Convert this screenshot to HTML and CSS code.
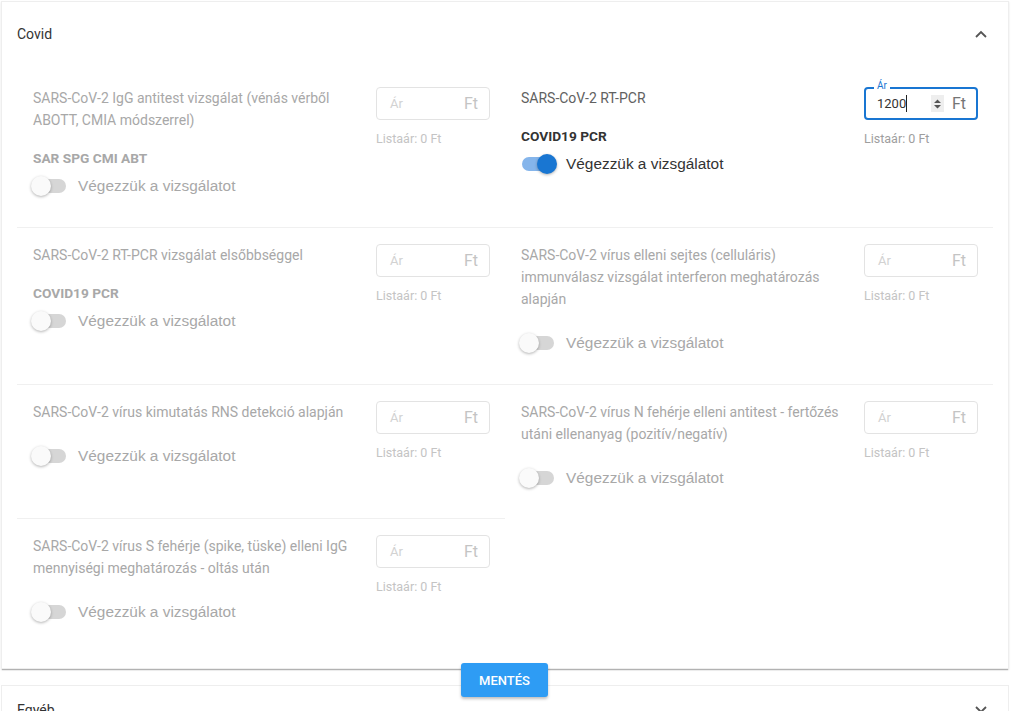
FILE: index.html
```html
<!DOCTYPE html>
<html>
    <head>
        <meta charset="utf-8">
        <title>Vizsgálatok</title>
        <link rel="stylesheet" href="styles.css">
    </head>
    <body>
        <div class="wrapper">
            <div class="panel open">
                <div class="panel-head">
                    <span>Covid</span>
                    <svg class="chev" width="12" height="8" viewBox="0 0 12 8"><path d="M1 7 L6 2 L11 7" fill="none" stroke="#555" stroke-width="1.8"/></svg>
                </div>
                <div class="grid">
                    <div class="cell off">
                        <div class="info">
                            <div class="name">SARS-CoV-2 IgG antitest vizsgálat (vénás vérből ABOTT, CMIA módszerrel)</div>
                            <div class="code">SAR SPG CMI ABT</div>
                            <label class="switch"><span class="track"><span class="knob"></span></span>Végezzük a vizsgálatot</label>
                        </div>
                        <div class="price">
                            <div class="field"><span class="ph">Ár</span><span class="unit">Ft</span></div>
                            <div class="list">Listaár: 0 Ft</div>
                        </div>
                    </div>
                    <div class="cell">
                        <div class="info">
                            <div class="name">SARS-CoV-2 RT-PCR</div>
                            <div class="code">COVID19 PCR</div>
                            <label class="switch on"><span class="track"><span class="knob"></span></span>Végezzük a vizsgálatot</label>
                        </div>
                        <div class="price">
                            <div class="field focus">
                                <span class="legend">Ár</span>
                                <span class="val">1200<i class="caret"></i></span>
                                <span class="spin"><svg width="9" height="12" viewBox="0 0 9 12"><path d="M1 5 L4.5 1.5 L8 5 Z M1 7 L4.5 10.5 L8 7 Z" fill="#555"/></svg></span>
                                <span class="unit">Ft</span>
                            </div>
                            <div class="list">Listaár: 0 Ft</div>
                        </div>
                    </div>
                    <div class="cell off">
                        <div class="info">
                            <div class="name">SARS-CoV-2 RT-PCR vizsgálat elsőbbséggel</div>
                            <div class="code">COVID19 PCR</div>
                            <label class="switch"><span class="track"><span class="knob"></span></span>Végezzük a vizsgálatot</label>
                        </div>
                        <div class="price">
                            <div class="field"><span class="ph">Ár</span><span class="unit">Ft</span></div>
                            <div class="list">Listaár: 0 Ft</div>
                        </div>
                    </div>
                    <div class="cell off">
                        <div class="info">
                            <div class="name">SARS-CoV-2 vírus elleni sejtes (celluláris) immunválasz vizsgálat interferon meghatározás alapján</div>
                            <label class="switch"><span class="track"><span class="knob"></span></span>Végezzük a vizsgálatot</label>
                        </div>
                        <div class="price">
                            <div class="field"><span class="ph">Ár</span><span class="unit">Ft</span></div>
                            <div class="list">Listaár: 0 Ft</div>
                        </div>
                    </div>
                    <div class="cell off">
                        <div class="info">
                            <div class="name">SARS-CoV-2 vírus kimutatás RNS detekció alapján</div>
                            <label class="switch"><span class="track"><span class="knob"></span></span>Végezzük a vizsgálatot</label>
                        </div>
                        <div class="price">
                            <div class="field"><span class="ph">Ár</span><span class="unit">Ft</span></div>
                            <div class="list">Listaár: 0 Ft</div>
                        </div>
                    </div>
                    <div class="cell off">
                        <div class="info">
                            <div class="name">SARS-CoV-2 vírus N fehérje elleni antitest - fertőzés utáni ellenanyag (pozitív/negatív)</div>
                            <label class="switch"><span class="track"><span class="knob"></span></span>Végezzük a vizsgálatot</label>
                        </div>
                        <div class="price">
                            <div class="field"><span class="ph">Ár</span><span class="unit">Ft</span></div>
                            <div class="list">Listaár: 0 Ft</div>
                        </div>
                    </div>
                    <div class="cell off">
                        <div class="info">
                            <div class="name">SARS-CoV-2 vírus S fehérje (spike, tüske) elleni IgG mennyiségi meghatározás - oltás után</div>
                            <label class="switch"><span class="track"><span class="knob"></span></span>Végezzük a vizsgálatot</label>
                        </div>
                        <div class="price">
                            <div class="field"><span class="ph">Ár</span><span class="unit">Ft</span></div>
                            <div class="list">Listaár: 0 Ft</div>
                        </div>
                    </div>
                </div>
            </div>
            <div class="panel">
                <div class="panel-head small">
                    <span>Egyéb</span>
                    <svg class="chev" width="12" height="8" viewBox="0 0 12 8"><path d="M1 1 L6 6 L11 1" fill="none" stroke="#555" stroke-width="1.8"/></svg>
                </div>
            </div>
            <button class="save">MENTÉS</button>
        </div>
    </body>
</html>
```
FILE: styles.css
```css
*{
    padding: 0;
    margin: 0;
    box-sizing: border-box;
}
body {
    background: #fff;
    font-family: Roboto, "Liberation Sans", sans-serif;
    color: #333;
    overflow: hidden;
}
.wrapper {
    width: 1009px;
    padding: 1px 0 0 1px;
    position: relative;
}
.panel {
    border: 1px solid #eeeeee;
    background: #fff;
}
.panel.open {
    margin-bottom: 16px;
    box-shadow: 0 2px 1px -1px rgba(0,0,0,.25), 0 1px 2px rgba(0,0,0,.1);
    padding-bottom: 15px;
}
.panel-head {
    height: 63px;
    display: flex;
    align-items: center;
    justify-content: space-between;
    padding: 0 21px 0 15px;
    font-size: 14px;
    color: #333;
}
.panel-head.small {
    height: 48px;
}
.grid {
    display: grid;
    grid-template-columns: 488px 488px;
    padding: 6px 0 0 15px;
}
.cell {
    display: flex;
    padding: 16px 15px 28px 16px;
    border-bottom: 1px solid #f0f0f0;
}
.cell:nth-last-child(-n+2) {
    border-bottom: 0;
}
.info {
    flex: 1;
    padding-right: 12px;
}
.name {
    font-size: 14px;
    line-height: 22px;
    color: #616161;
}
.code {
    font-size: 13.7px;
    font-weight: bold;
    line-height: 20px;
    margin-top: 17px;
    color: #333;
}
.switch {
    display: flex;
    align-items: center;
    height: 26px;
    margin-top: 20px;
    font-family: "Liberation Sans", Arial, sans-serif;
    font-size: 15.4px;
    color: #333;
}
.code + .switch {
    margin-top: 5px;
}
.track {
    width: 32px;
    height: 14px;
    border-radius: 7px;
    background: #d6d6d6;
    position: relative;
    margin: 0 12px 0 1px;
}
.knob {
    position: absolute;
    top: -3px;
    left: -3px;
    width: 20px;
    height: 20px;
    border-radius: 50%;
    background: #fafafa;
    box-shadow: 0 1px 3px rgba(0,0,0,.3);
}
.switch.on .track {
    background: #85b5eb;
}
.switch.on .knob {
    left: 15px;
    background: #1976d2;
}
.off .name,
.off .code,
.off .switch {
    color: #a8a8a8;
}
.price {
    width: 114px;
}
.field {
    height: 33px;
    border: 1px solid #e3e3e3;
    border-radius: 4px;
    display: flex;
    align-items: center;
    padding: 0 11px 0 13px;
    position: relative;
}
.ph {
    flex: 1;
    font-size: 13px;
    color: #d2d2d2;
}
.unit {
    font-size: 16px;
    color: #c4c4c4;
}
.field.focus {
    border: 2px solid #1976d2;
    padding: 0 10px 0 11px;
}
.legend {
    position: absolute;
    top: -9px;
    left: 8px;
    padding: 0 3px;
    background: #fff;
    font-size: 10px;
    line-height: 12px;
    color: #1976d2;
}
.val {
    flex: 1;
    font-size: 13px;
    color: #333;
    display: flex;
    align-items: center;
}
.caret {
    width: 1px;
    height: 17px;
    background: #222;
}
.spin {
    width: 13px;
    height: 17px;
    background: #eee;
    display: flex;
    align-items: center;
    justify-content: center;
    margin-right: 8px;
}
.field.focus .unit {
    color: #757575;
}
.list {
    margin-top: 11px;
    font-size: 12.5px;
    line-height: 16px;
    color: #c4c4c4;
}
.cell:not(.off) .list {
    color: #9e9e9e;
}
.save {
    position: absolute;
    left: 461px;
    top: 663px;
    width: 87px;
    height: 34px;
    border: 0;
    border-radius: 3px;
    background: #2e9cf4;
    color: #fff;
    font-family: Roboto, sans-serif;
    font-size: 13px;
    font-weight: 500;
    box-shadow: 0 2px 3px rgba(0,0,0,.25);
}
```
